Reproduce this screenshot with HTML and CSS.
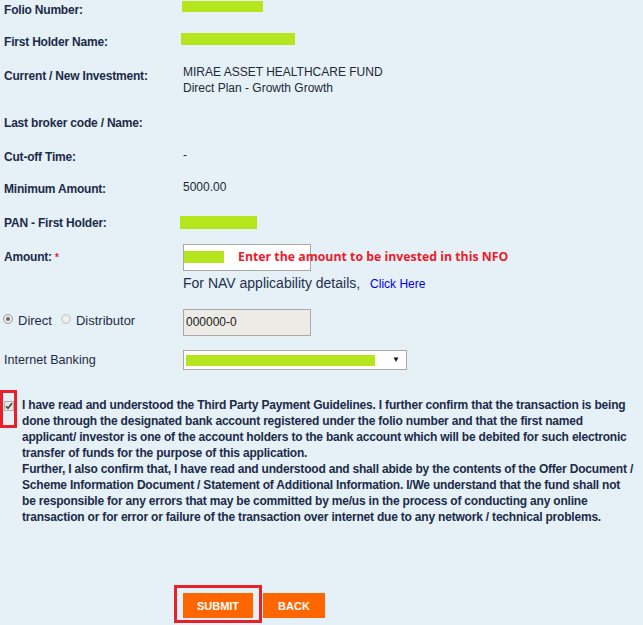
FILE: index.html
```html
<!DOCTYPE html>
<html>
<head>
<meta charset="utf-8">
<link rel="stylesheet" href="styles.css">
</head>
<body>
<div class="page">
  <div class="row r-folio">
    <div class="label">Folio Number:</div>
    <div class="value"><span class="mask mask-folio"></span></div>
  </div>
  <div class="row r-holder">
    <div class="label">First Holder Name:</div>
    <div class="value"><span class="mask mask-holder"></span></div>
  </div>
  <div class="row r-invest">
    <div class="label">Current / New Investment:</div>
    <div class="value text up4">MIRAE ASSET HEALTHCARE FUND<br>Direct Plan - Growth Growth</div>
  </div>
  <div class="row r-broker">
    <div class="label">Last broker code / Name:</div>
    <div class="value"></div>
  </div>
  <div class="row r-cutoff">
    <div class="label">Cut-off Time:</div>
    <div class="value text up2">-</div>
  </div>
  <div class="row r-min">
    <div class="label">Minimum Amount:</div>
    <div class="value text up2">5000.00</div>
  </div>
  <div class="row r-pan">
    <div class="label">PAN - First Holder:</div>
    <div class="value"><span class="mask mask-pan"></span></div>
  </div>
  <div class="row r-amount">
    <div class="label">Amount: <span class="req">*</span></div>
    <div class="value amount-col">
      <div class="amount-box"><span class="mask mask-amount"></span></div>
      <div class="hint">Enter the amount to be invested in this NFO</div>
      <div class="nav">For NAV applicability details, <a class="link" href="#">Click Here</a></div>
    </div>
  </div>
  <div class="row r-radio">
    <div class="label radios">
      <span class="radio checked"></span><span class="rlabel">Direct</span>
      <span class="radio"></span><span class="rlabel">Distributor</span>
    </div>
    <div class="value"><div class="broker-box">000000-0</div></div>
  </div>
  <div class="row r-bank">
    <div class="label">Internet Banking</div>
    <div class="value">
      <div class="select"><span class="mask mask-bank"></span><span class="arrow">&#9660;</span></div>
    </div>
  </div>
  <div class="terms">
    <div class="check-col"><span class="checkbox"><svg width="8" height="8" viewBox="0 0 8 8"><path d="M1 4.2 L3 6.3 L7 1.3" fill="none" stroke="#444" stroke-width="1.6"/></svg></span><span class="hl hl-check"></span></div>
    <p class="terms-text">I have read and understood the Third Party Payment Guidelines. I further confirm that the transaction is being done through the designated bank account registered under the folio number and that the first named<br>applicant/ investor is one of the account holders to the bank account which will be debited for such electronic transfer of funds for the purpose of this application.<br>Further, I also confirm that, I have read and understood and shall abide by the contents of the Offer Document / Scheme Information Document / Statement of Additional Information. I/We understand that the fund shall not<br>be responsible for any errors that may be committed by me/us in the process of conducting any online transaction or for error or failure of the transaction over internet due to any network / technical problems.</p>
  </div>
  <div class="buttons">
    <span class="btn-wrap"><button class="btn">SUBMIT</button><span class="hl hl-submit"></span></span>
    <button class="btn">BACK</button>
  </div>
</div>
</body>
</html>
```
FILE: styles.css
```css
html, body {
  margin: 0;
  padding: 0;
  background: #e5f0f7;
}
.page {
  width: 643px;
  height: 625px;
  overflow: hidden;
  font-family: "Liberation Sans", Arial, sans-serif;
  font-size: 12px;
  color: #1c2b47;
  padding-top: 2px;
  box-sizing: border-box;
}
.row {
  display: flex;
  align-items: flex-start;
}
.label {
  width: 179px;
  padding-left: 4px;
  font-weight: bold;
  line-height: 16px;
  letter-spacing: -0.2px;
  flex: none;
}
.value {
  flex: 1;
  line-height: 16px;
}
.text {
  color: #222a36;
}
.up4 { margin-top: -4px; }
.up2 { margin-top: -2px; }
.r-folio { height: 32px; }
.r-holder { height: 34px; }
.r-invest { height: 47px; }
.r-broker { height: 34px; }
.r-cutoff { height: 32px; }
.r-min { height: 34px; }
.r-pan { height: 34px; }
.r-amount { height: 60px; }
.r-radio { height: 43px; }
.r-bank { height: 45px; }

.mask {
  display: block;
  background: #b5e61d;
}
.mask-folio { width: 81px; height: 11px; margin-top: -1px; margin-left: -1px; }
.mask-holder { width: 114px; height: 12px; margin-top: -1px; margin-left: -2px; }
.mask-pan { width: 77px; height: 13px; margin-top: 1px; margin-left: -3px; }

.req { color: #e0202a; font-size: 10px; }
.amount-col {
  position: relative;
  margin-top: -5px;
}
.amount-box {
  width: 126px;
  height: 25px;
  border: 1px solid #a9a9a9;
  background: #fff;
}
.mask-amount { width: 40px; height: 12px; margin-top: 6px; }
.hint {
  position: absolute;
  left: 55px;
  top: 4px;
  font-family: "Open Sans", "Liberation Sans", sans-serif;
  font-weight: bold;
  font-size: 12.3px;
  line-height: 18px;
  color: #e8202a;
  white-space: nowrap;
}
.nav {
  font-size: 14px;
  line-height: 18px;
  margin-top: 3px;
  color: #22304a;
}
.link {
  color: #0000ee;
  font-size: 12px;
  text-decoration: none;
  margin-left: 6px;
}

.radios {
  display: flex;
  align-items: center;
  padding-left: 3px;
  width: 180px;
  margin-top: 4px;
  letter-spacing: 0;
}
.radio {
  width: 8px;
  height: 8px;
  border-radius: 50%;
  border: 1px solid #c3c3c3;
  background: radial-gradient(circle, #f4f4f4 0, #e2e2e2 100%);
  position: relative;
  top: -2px;
}
.radio.checked::after {
  content: "";
  position: absolute;
  left: 2px;
  top: 2px;
  width: 4px;
  height: 4px;
  border-radius: 50%;
  background: #6a6a6a;
}
.radio.checked { border-color: #9a9a9a; }
.rlabel {
  font-weight: normal;
  font-size: 13px;
  margin-left: 5px;
  margin-right: 9px;
  color: #1f2c44;
}
.broker-box {
  height: 25px;
  border: 1px solid #a9a9a9;
  background: #ecebe5;
  font-size: 12px;
  line-height: 25px;
  padding-left: 2px;
  width: 124px;
  color: #1a1a1a;
}
.r-bank .label { font-weight: normal; font-size: 12.6px; letter-spacing: 0; color: #1f2c44; }
.r-bank .value { margin-top: -2px; }
.select {
  width: 222px;
  height: 18px;
  border: 1px solid #a9a9a9;
  background: #fff;
  display: flex;
  align-items: center;
}
.mask-bank { width: 189px; height: 11px; margin-left: 2px; }
.arrow {
  font-size: 8px;
  margin-left: auto;
  margin-right: 6px;
  color: #111;
}

.terms {
  display: flex;
  align-items: flex-start;
}
.check-col {
  position: relative;
  width: 22px;
  flex: none;
}
.checkbox {
  position: absolute;
  left: 4px;
  top: 4px;
  width: 8px;
  height: 8px;
  border: 1px solid #b0b0b0;
  background: #e6e6e6;
  display: flex;
  align-items: center;
  justify-content: center;
}
.hl {
  position: absolute;
  border: 3px solid #e8202a;
  box-sizing: border-box;
}
.hl-check {
  left: 0;
  top: -7px;
  width: 17px;
  height: 38px;
}
.terms-text {
  margin: 0;
  width: 620px;
  font-weight: bold;
  letter-spacing: -0.2px;
  line-height: 16px;
  color: #1c2b47;
}

.buttons {
  display: flex;
  gap: 10px;
  padding-left: 183px;
  margin-top: 68px;
}
.btn-wrap { position: relative; display: flex; }
.btn {
  border: none;
  background: #ff6600;
  color: #fff;
  font-family: "Liberation Sans", Arial, sans-serif;
  font-weight: bold;
  font-size: 11px;
  height: 25px;
  padding: 0;
  width: 70px;
}
.buttons > .btn { width: 62px; }
.hl-submit {
  left: -9px;
  top: -8px;
  width: 88px;
  height: 38px;
}
```
